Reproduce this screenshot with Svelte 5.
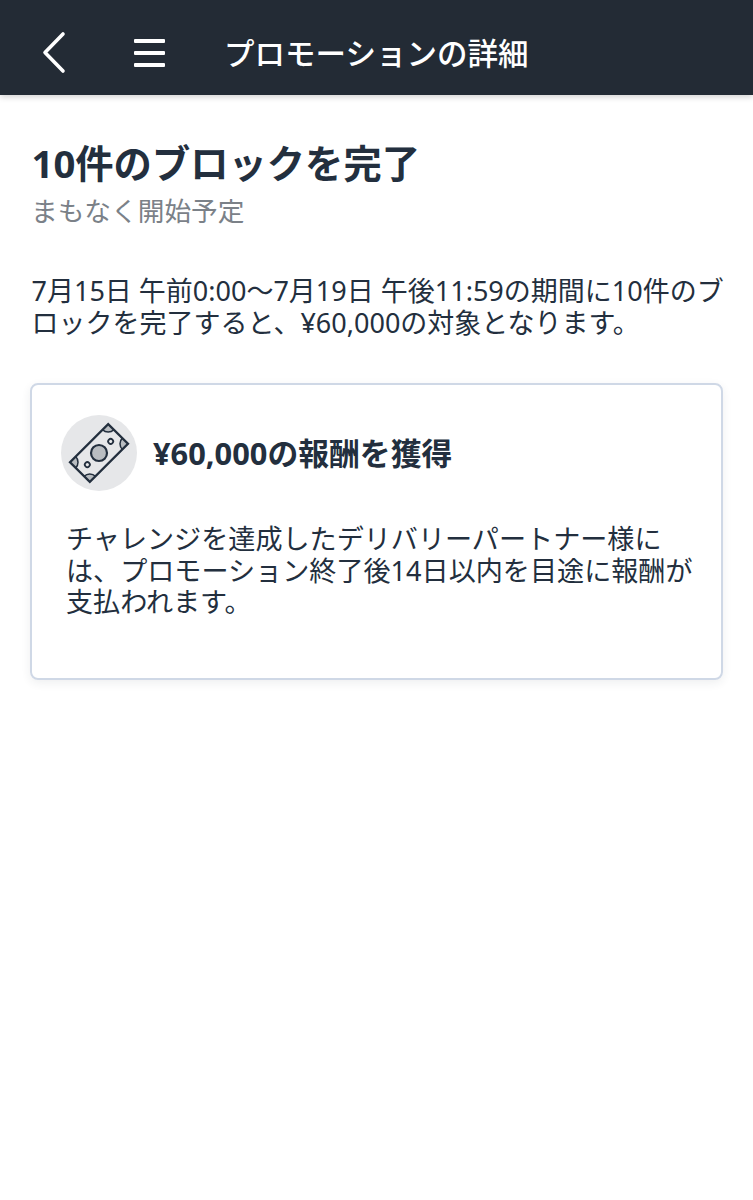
<script>
  const title = '10件のブロックを完了';
</script>

<div class="page">
  <header class="bar">
    <svg class="back" width="26" height="44" viewBox="0 0 26 44" aria-hidden="true">
      <path d="M23 3 L5 21.500 L23 40" fill="none" stroke="#fff" stroke-width="3.600" stroke-linecap="round" stroke-linejoin="round"/>
    </svg>
    <div class="burger"><span></span><span></span><span></span></div>
    <h1>プロモーションの詳細</h1>
  </header>

  <main>
    <h2>{title}</h2>
    <p class="sub">まもなく開始予定</p>
    <p class="desc">7月15日 午前0:00〜7月19日 午後11:59の期間に10件のブロックを完了すると、¥60,000の対象となります。</p>

    <section class="card">
      <div class="card-head">
        <div class="circle">
          <svg width="76" height="76" viewBox="0 0 76 76" aria-hidden="true">
            <g transform="rotate(-45 38 38)">
              <path d="M11 24 h8 a8 8 0 0 1 -8 8 z M65 24 h-8 a8 8 0 0 0 8 8 z M11 52 h8 a8 8 0 0 0 -8 -8 z M65 52 h-8 a8 8 0 0 1 8 -8 z" fill="#b9bdc1"/>
              <rect x="11" y="24" width="54" height="28" fill="none" stroke="#232f3e" stroke-width="2.300"/>
              <path d="M19 24 a8 8 0 0 1 -8 8 M57 24 a8 8 0 0 0 8 8 M19 52 a8 8 0 0 0 -8 -8 M57 52 a8 8 0 0 1 8 -8" fill="none" stroke="#232f3e" stroke-width="1.500"/>
              <circle cx="38" cy="38" r="8" fill="#b9bdc1" stroke="#232f3e" stroke-width="2.200"/>
              <circle cx="21.500" cy="38" r="2.500" fill="none" stroke="#232f3e" stroke-width="1.800"/>
              <circle cx="54.500" cy="38" r="2.500" fill="none" stroke="#232f3e" stroke-width="1.800"/>
            </g>
          </svg>
        </div>
        <h3>¥60,000の報酬を獲得</h3>
      </div>
      <p class="card-text">チャレンジを達成したデリバリーパートナー様には、プロモーション終了後14日以内を目途に報酬が支払われます。</p>
    </section>
  </main>
</div>

<style>
  :global(body) {
    background: #fff;
  }
  .page {
    width: 753px;
    min-height: 1200px;
    background: #fff;
    font-family: "Noto Sans", "Noto Sans CJK JP", sans-serif;
    color: #232f3e;
  }
  .bar {
    height: 95px;
    box-sizing: border-box;
    background: #232b35;
    box-shadow: 0 2px 6px rgba(0, 0, 0, 0.18);
    display: flex;
    align-items: center;
    padding: 10px 0 0 40px;
    color: #fff;
  }
  .back {
    display: block;
  }
  .burger {
    width: 31px;
    margin-left: 68px;
    display: flex;
    flex-direction: column;
    gap: 8px;
  }
  .burger span {
    display: block;
    height: 4px;
    background: #fff;
    border-radius: 1px;
  }
  h1 {
    margin: 0 0 0 59px;
    font-size: 30.500px;
    font-weight: 500;
    line-height: 40px;
  }
  main {
    padding: 42px 24px 0 31.500px;
  }
  h2 {
    margin: 0;
    font-size: 38.300px;
    line-height: 52px;
    font-weight: 700;
  }
  .sub {
    margin: 2px 0 0 -0.500px;
    font-size: 26.700px;
    line-height: 40px;
    color: #7b8188;
  }
  .desc {
    margin: 44px 0 0;
    font-size: 27px;
    line-height: 32px;
    color: #232f3e;
  }
  .card {
    box-sizing: border-box;
    margin: 44px 0 0 -1.500px;
    width: 693px;
    height: 297px;
    border: 2px solid #cfd8e6;
    border-radius: 8px;
    box-shadow: 0 3px 10px rgba(35, 47, 62, 0.08);
    padding: 30px 20px 0 29px;
  }
  .card-head {
    display: flex;
    align-items: center;
    gap: 16px;
  }
  .circle {
    width: 76px;
    height: 76px;
    border-radius: 50%;
    background: #e6e7e9;
    flex: none;
  }
  .circle svg {
    display: block;
  }
  h3 {
    margin: 0;
    font-size: 30.800px;
    line-height: 40px;
    font-weight: 700;
  }
  .card-text {
    margin: 32px 0 0 5px;
    font-size: 27.100px;
    line-height: 31.700px;
  }
</style>
